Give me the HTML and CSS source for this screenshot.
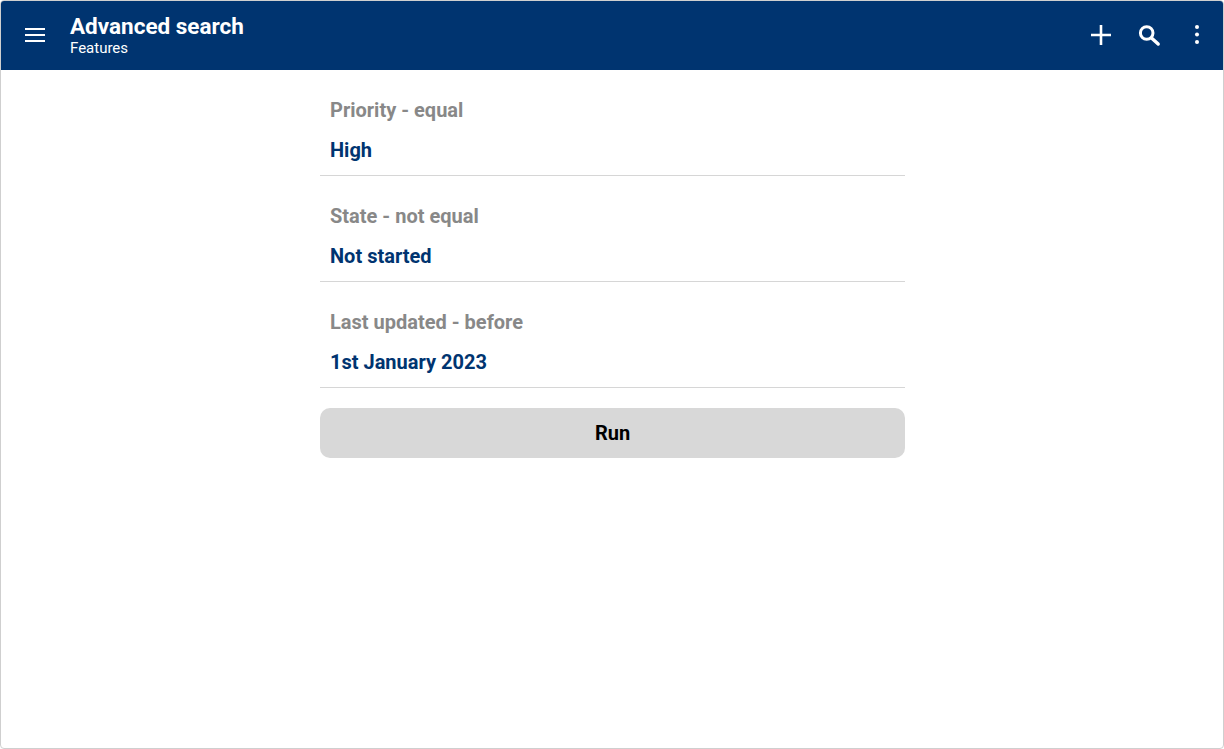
FILE: index.html
```html
<!DOCTYPE html>
<html>
<head>
	<title>Advanced search</title>
	<meta charset="UTF-8">
	<meta name="viewport" content="width=device-width, initial-scale=1.0">
	<link rel="stylesheet" href="styles.css">
</head>
<body>
	<div class="window">
		<header class="topbar">
			<svg class="menu-icon" width="22" height="16" viewBox="0 0 22 16">
				<path d="M1 2h20M1 8h20M1 14h20" stroke="#fff" stroke-width="2" fill="none"/>
			</svg>
			<div class="titles">
				<div class="title">Advanced search</div>
				<div class="subtitle">Features</div>
			</div>
			<div class="actions">
				<svg width="24" height="24" viewBox="0 0 24 24">
					<path d="M12 2v20M2 12h20" stroke="#fff" stroke-width="2.6" fill="none"/>
				</svg>
				<svg width="24" height="24" viewBox="0 0 24 24">
					<circle cx="8.7" cy="10" r="6.3" stroke="#fff" stroke-width="3" fill="none"/>
					<path d="M13.5 15l6.7 6" stroke="#fff" stroke-width="3.4" stroke-linecap="round" fill="none"/>
				</svg>
				<svg class="more-icon" width="6" height="24" viewBox="0 0 6 24">
					<circle cx="3" cy="4" r="2" fill="#fff"/>
					<circle cx="3" cy="11.5" r="2" fill="#fff"/>
					<circle cx="3" cy="19" r="2" fill="#fff"/>
				</svg>
			</div>
		</header>
		<main class="content">
			<div class="field">
				<div class="field-label">Priority - equal</div>
				<div class="field-value">High</div>
			</div>
			<div class="field">
				<div class="field-label">State - not equal</div>
				<div class="field-value">Not started</div>
			</div>
			<div class="field">
				<div class="field-label">Last updated - before</div>
				<div class="field-value">1st January 2023</div>
			</div>
			<div class="run">Run</div>
		</main>
	</div>
</body>
</html>
```

FILE: styles.css
```css
html, body {
	height: 100%;
}

body {
	margin: 0;
	padding: 0;
	background-color: #fff;
	font-family: Roboto, sans-serif;
}

.window {
	height: 100%;
	box-sizing: border-box;
	border: 1px solid #cfcfcf;
	border-radius: 4px;
	overflow: hidden;
	display: flex;
	flex-direction: column;
}

.topbar {
	height: 69px;
	box-sizing: border-box;
	flex: none;
	background-color: #003470;
	color: #fff;
	display: flex;
	align-items: center;
	padding: 0 23px 1px;
}

.menu-icon {
	margin-right: 24px;
}

.titles {
	flex: 1;
	margin-bottom: 1px;
}

.title {
	font-size: 22.5px;
	font-weight: 700;
	line-height: 26px;
	margin-bottom: 1px;
}

.subtitle {
	font-size: 15px;
	line-height: 16px;
}

.actions {
	display: flex;
	align-items: center;
	gap: 25px;
}

.more-icon {
	margin-left: 7px;
}

.content {
	width: 585px;
	margin-left: 319px;
	padding-top: 20px;
}

.field {
	height: 86px;
	box-sizing: border-box;
	border-bottom: 1px solid #d6d6d6;
	margin-bottom: 20px;
	padding-left: 10px;
}

.field-label {
	font-size: 20px;
	font-weight: 700;
	line-height: 40px;
	color: #888;
}

.field-value {
	font-size: 20px;
	font-weight: 700;
	line-height: 40px;
	color: #003470;
}

.run {
	height: 50px;
	background-color: #d8d8d8;
	border-radius: 10px;
	color: #000;
	font-size: 20px;
	font-weight: 700;
	line-height: 50px;
	text-align: center;
}
```
